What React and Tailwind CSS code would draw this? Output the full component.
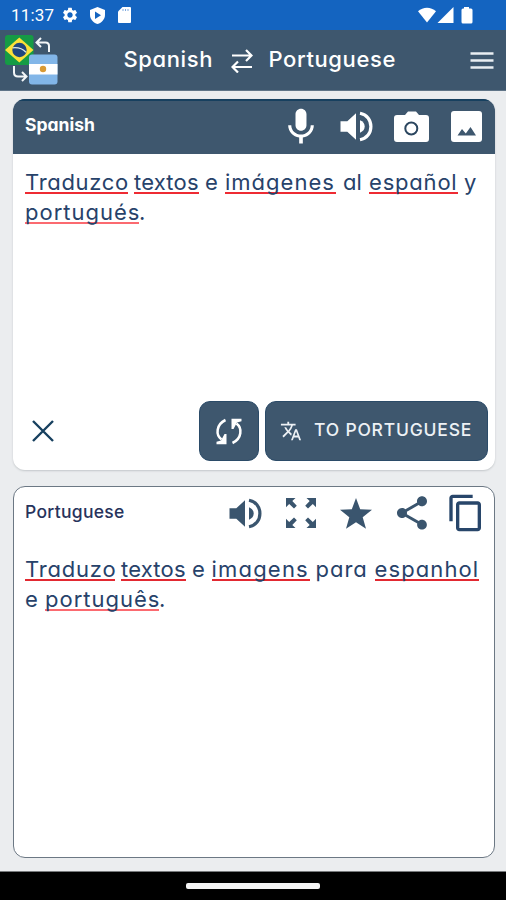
import React from 'react';
import { MdMic, MdShare, MdContentCopy, MdTranslate, MdSettings } from 'react-icons/md';

const FONT = "font-[Inter,'Liberation_Sans',sans-serif] [font-feature-settings:'cv11']";

function StatusBar() {
  return (
    <div className="flex h-[30px] items-center bg-[#1464c0] pl-[11px] pr-[33px] text-white">
      <span className="w-[44px] whitespace-nowrap font-[Roboto,sans-serif] text-[17px] leading-[30px] tracking-[0.2px]">11:37</span>
      <MdSettings className="ml-[6px] size-[18px]" />
      <svg className="ml-[11px] h-[17px] w-[15px]" viewBox="0 0 15 17">
        <path d="M7.500 0L15 3v5c0 4.200-3.200 7.700-7.500 9C3.200 15.700 0 12.200 0 8V3z" fill="white" />
        <path d="M5 4.500l6 3.700-6 3.700z" fill="#1464c0" />
      </svg>
      <svg className="ml-[13px] h-[16px] w-[13px]" viewBox="0 0 13 16">
        <path d="M4.500 0H12a1 1 0 0 1 1 1v14a1 1 0 0 1-1 1H1a1 1 0 0 1-1-1V4.500z" fill="white" />
        <path d="M5 2v2M7.500 2v2M10 2v2" stroke="#7da9df" strokeWidth="1" />
      </svg>
      <svg className="ml-auto h-[17px] w-[55px]" viewBox="0 0 55 17">
        <path d="M0 4.200C5-.5 13-.5 18 4.200L9 15.500z" fill="white" />
        <path d="M19.500 16L35.500 0v16z" fill="white" />
        <path d="M46 0h5v1.500h2a1.500 1.500 0 0 1 1.500 1.500v12a1.500 1.500 0 0 1-1.500 1.500h-8a1.500 1.500 0 0 1-1.500-1.500v-12A1.500 1.500 0 0 1 45 1.500h1z" fill="white" />
      </svg>
    </div>
  );
}

function Logo() {
  return (
    <svg className="h-[54px] w-[56px] shrink-0" viewBox="4 34 56 54">
      <rect x="5" y="36" width="28.500" height="30" rx="3" fill="#169b45" />
      <path d="M19.300 38.500L33.500 51 19.300 63.500 5 51z" fill="#fbe138" />
      <circle cx="19.500" cy="51" r="7.200" fill="#21467d" />
      <path d="M12.800 48.800c5-.5 10 1 13.200 4.500" fill="none" stroke="#dce6e4" strokeWidth="1.300" />
      <path d="M49 53v-6q0-3.500-3.500-3.500H36.500M41 39l-4.500 4.500L41 48" fill="none" stroke="#f3f6f8" strokeWidth="2" />
      <path d="M14 67v6.500q0 4 4 4h8.500M22 73l4.500 4.500-4.500 4.500" fill="none" stroke="#f3f6f8" strokeWidth="2" />
      <rect x="29" y="55.500" width="28.500" height="30" rx="3" fill="#82b6e8" />
      <rect x="29" y="65" width="28.500" height="10.500" fill="white" />
      <circle cx="43" cy="70" r="3.200" fill="#d99a34" />
    </svg>
  );
}

function Header() {
  return (
    <div className="flex h-[61px] items-center border-b border-[#5f7487] bg-[#3e576e] pl-1 text-white">
      <Logo />
      <div className="ml-[63.500px] flex h-full items-start pt-[14.500px] text-[22px] font-medium leading-[28px]">
        <span className="w-[107px] whitespace-nowrap tracking-[0.6px]">Spanish</span>
        <svg className="mt-[4px] h-[24px] w-[22px]" viewBox="0 0 22 24" fill="none" stroke="white" strokeWidth="2.200">
          <path d="M1 6.500h19M15 1l5.500 5.500L15 12M21 18H2M7 12.500L1.500 18 7 23.500" />
        </svg>
        <span className="ml-[16px] w-[128px] whitespace-nowrap tracking-[0.600px]">Portuguese</span>
      </div>
      <svg className="ml-auto mr-[12px] h-[17px] w-[24px] shrink-0" viewBox="0 0 24 17">
        <path d="M.5 1.500h23M.5 8.500h23M.5 15.500h23" stroke="#e9eef2" strokeWidth="2.300" />
      </svg>
    </div>
  );
}

function IconCell({ children }) {
  return <div className="flex w-[55.300px] items-center justify-center">{children}</div>;
}

function Speaker() {
  return (
    <svg className="h-[31px] w-[33px]" viewBox="0 0 33 31" fill="currentColor">
      <path d="M.5 10.200h6.800L16 2.200v26.600L7.300 20.800H.5z" />
      <path d="M20 9.300c3 1.200 4.700 3.500 4.700 6.200s-1.700 5-4.700 6.200z" />
      <path d="M20 2.200c7 1.300 10.900 6.800 10.900 13.300S27 27.500 20 28.800" fill="none" stroke="currentColor" strokeWidth="3.200" />
    </svg>
  );
}

// A word of the text area; misspelled ones carry the red spell-check line.
function Word({ children, className, marked }) {
  return (
    <span className={`h-[22px] whitespace-nowrap leading-[21px] ${marked ? 'border-b-2' : ''} ${className}`}>{children}</span>
  );
}

function SourceCard() {
  return (
    <div className="flex h-[371px] flex-col overflow-hidden rounded-[12px] bg-white shadow-[0_1px_2px_#c3c7ca]">
      <div className="flex h-[54.500px] shrink-0 border-t-2 border-[#17405f] bg-[#3e576e] text-white">
        <span className="ml-3 mt-[12px] text-[17.500px] font-bold leading-[24px] tracking-[0px]">Spanish</span>
        <div className="ml-auto flex h-[51px]">
          <IconCell><MdMic className="size-[44px]" /></IconCell>
          <IconCell><Speaker /></IconCell>
          <IconCell>
            <svg className="mr-px h-[32px] w-[35px]" viewBox="0 0 35 32">
              <path d="M3 4h8l3-3.500h8L25 4h7a3 3 0 0 1 3 3v21a3 3 0 0 1-3 3H3a3 3 0 0 1-3-3V7a3 3 0 0 1 3-3z" fill="white" />
              <circle cx="17.300" cy="17.500" r="6" fill="none" stroke="#2b465f" strokeWidth="2" />
            </svg>
          </IconCell>
          <IconCell>
            <svg className="mr-px h-[31px] w-[31px]" viewBox="0 0 31 31">
              <rect width="31" height="31" rx="3" fill="white" />
              <path d="M6.500 24.500l4.500-6.500 3.800 4.600L19.500 16l5.500 8.500z" fill="#3e576e" />
            </svg>
          </IconCell>
        </div>
      </div>
      <div className="flex flex-col pl-3 pt-[18.500px] text-[22px] text-[#27426a]">
        <div className="flex h-[30px]">
          <Word marked className="w-[103px] border-[#ee2b33] tracking-[0.700px]">Traduzco</Word>
          <Word marked className="ml-[6px] w-[65px] border-[#ee2b33] tracking-[0.200px]">textos</Word>
          <Word className="ml-[6px] w-[14px]">e</Word>
          <Word marked className="ml-[6px] w-[111px] border-[#ee2b33] tracking-[1px]">imágenes</Word>
          <Word className="ml-[7px] w-[19px]">al</Word>
          <Word marked className="ml-[7px] w-[89px] border-[#ee2b33] tracking-[0.800px]">español</Word>
          <Word className="ml-[6px]">y</Word>
        </div>
        <div className="flex">
          <Word marked className="w-[114px] border-[#fb6a70] tracking-[1px]">portugués</Word>
          <Word>.</Word>
        </div>
      </div>
      <div className="mb-[9px] mt-auto flex h-[60px] items-center pl-[19px] pr-[6.500px]">
        <svg className="h-[22px] w-[22px]" viewBox="0 0 22 22">
          <path d="M1 1l20 20M21 1L1 21" stroke="#17405f" strokeWidth="2.400" />
        </svg>
        <div className="ml-auto flex h-[60px] w-[60px] items-center justify-center rounded-[11px] border border-[#2b4b68] bg-[#3e576e]">
          <svg className="h-[27px] w-[28px]" viewBox="0 0 28 27">
            <path d="M10.500 2C1 6.500.5 17 6.500 21.500M17.500 25C27 20.500 27.500 10 21.500 5.500" fill="none" stroke="white" strokeWidth="2.500" />
            <path d="M1.500 26.200v-2.400l4.500-1.300 3.500-6.500h2v10.200zM26.500.8v2.400L22 4.500 18.500 11h-2V.8z" fill="white" />
          </svg>
        </div>
        <div className="ml-[6px] flex h-[60px] w-[223px] items-center rounded-[11px] border border-[#2b4b68] bg-[#3e576e] text-[#edf1f5]">
          <MdTranslate className="ml-[14px] size-[22px]" />
          <span className="-mt-[3px] ml-[12px] whitespace-nowrap text-[17.500px] font-medium leading-[24px] tracking-[0.800px]">TO PORTUGUESE</span>
        </div>
      </div>
    </div>
  );
}

function TargetCard() {
  return (
    <div className="flex h-[372px] flex-col rounded-[12px] border-[1.500px] border-[#6c7884] bg-white">
      <div className="flex h-[53px] text-[#3a556e]">
        <span className="ml-[11px] mt-[12.500px] text-[17.500px] font-medium leading-[24px] tracking-[0.300px] text-[#27335c]">Portuguese</span>
        <div className="-mr-px ml-auto flex h-[52px]">
          <IconCell><Speaker /></IconCell>
          <IconCell>
            <svg className="h-[30px] w-[30px]" viewBox="0 0 30 30" fill="currentColor">
              <path id="arrow" d="M0 0h9.500L6.300 3 10.800 7.700 8 10.500 3.200 6 0 9.200z" />
              <use href="#arrow" transform="translate(30 0) scale(-1 1)" />
              <use href="#arrow" transform="translate(0 30) scale(1 -1)" />
              <use href="#arrow" transform="translate(30 30) scale(-1 -1)" />
            </svg>
          </IconCell>
          <IconCell>
            <svg className="mr-px h-[31px] w-[32px]" viewBox="0 0 32 31" fill="currentColor">
              <path d="M16 0l4.200 11.200L32 11.700l-9.300 7.500L26 30.700l-10-6.500-10 6.500 3.300-11.500L0 11.700l11.800-.5z" />
            </svg>
          </IconCell>
          <IconCell><MdShare className="size-[40px]" /></IconCell>
          <IconCell><MdContentCopy className="mr-px size-[40px] text-[#28466a]" /></IconCell>
        </div>
      </div>
      <div className="flex flex-col pl-[11px] pt-[18.500px] text-[22px] text-[#27426a]">
        <div className="flex h-[30px]">
          <Word marked className="w-[90px] border-[#e22931] tracking-[0.800px]">Traduzo</Word>
          <Word marked className="ml-[6px] w-[65px] border-[#e22931] tracking-[0.200px]">textos</Word>
          <Word className="ml-[6px] w-[14px]">e</Word>
          <Word marked className="ml-[5.500px] w-[98px] border-[#e22931] tracking-[1.200px]">imagens</Word>
          <Word className="ml-[6px] w-[54px] tracking-[1px]">para</Word>
          <Word marked className="ml-[5px] w-[104px] border-[#e22931] tracking-[1.100px]">espanhol</Word>
        </div>
        <div className="flex">
          <Word className="w-[14px]">e</Word>
          <Word marked className="ml-[6px] w-[114px] border-[#fb6a70] tracking-[1px]">português</Word>
          <Word>.</Word>
        </div>
      </div>
    </div>
  );
}

export default function App() {
  return (
    <div className={`flex h-[900px] w-[506px] flex-col overflow-hidden bg-[#ebedef] ${FONT}`}>
      <StatusBar />
      <Header />
      <main className="flex flex-1 flex-col gap-[16px] pl-[13px] pr-[11.500px] pt-2">
        <SourceCard />
        <TargetCard />
      </main>
      <div className="flex h-[29px] shrink-0 justify-center border-t border-[#777a7c] bg-black pt-[11px]">
        <div className="h-[6px] w-[134px] rounded-[2px] bg-[#f4f4f4]" />
      </div>
    </div>
  );
}
